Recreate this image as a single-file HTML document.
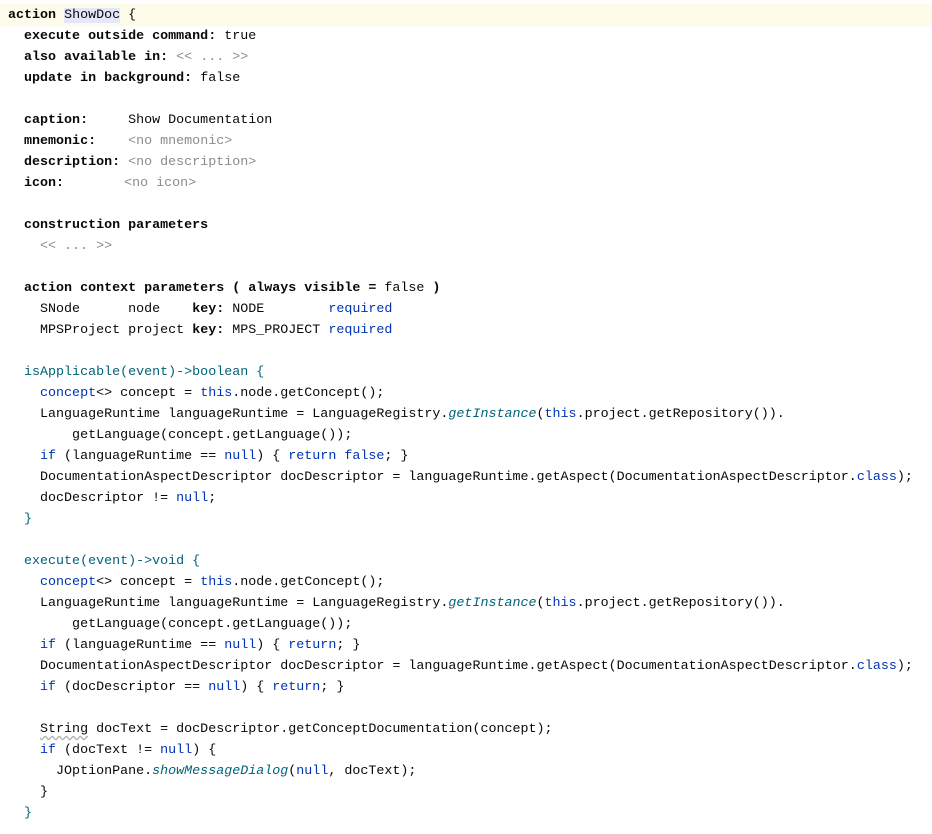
<!DOCTYPE html>
<html><head><meta charset="utf-8"><style>
body{margin:0;background:#fff;width:932px;height:834px;overflow:hidden;position:relative}
.hl{position:absolute;left:0;top:4px;width:932px;height:22px;background:#fdfbe9}
pre{position:absolute;left:8px;top:5px;margin:0;font-family:"Liberation Mono",monospace;font-size:13.35px;line-height:21px;color:#080808}
b{font-weight:bold}
.k{color:#0033b3}.m{color:#00627a}.i{color:#00627a;font-style:italic}.g{color:#8c8c8c}
.sel{background:#e6e6fa}
.w{text-decoration:underline wavy #b0b0b0;text-underline-offset:3px}
.nb{margin-left:-4px}
</style></head><body><div class="hl"></div>
<pre><b>action</b> <span class="sel">ShowDoc</span> {
  <b>execute outside command:</b> true
  <b>also available in:</b> <span class="g">&lt;&lt; ... &gt;&gt;</span>
  <b>update in background:</b> false

  <b>caption:</b>     Show Documentation
  <b>mnemonic:</b>    <span class="g">&lt;no mnemonic&gt;</span>
  <b>description:</b> <span class="g">&lt;no description&gt;</span>
  <b>icon:</b>        <span class="g nb">&lt;no icon&gt;</span>

  <b>construction parameters</b>
    <span class="g">&lt;&lt; ... &gt;&gt;</span>

  <b>action context parameters ( always visible = </b>false<b> )</b>
    SNode      node    <b>key:</b> NODE        <span class="k">required</span>
    MPSProject project <b>key:</b> MPS_PROJECT <span class="k">required</span>

  <span class="m">isApplicable(event)-&gt;boolean {</span>
    <span class="k">concept</span>&lt;&gt; concept = <span class="k">this</span>.node.getConcept();
    LanguageRuntime languageRuntime = LanguageRegistry.<span class="i">getInstance</span>(<span class="k">this</span>.project.getRepository()).
        getLanguage(concept.getLanguage());
    <span class="k">if</span> (languageRuntime == <span class="k">null</span>) { <span class="k">return false</span>; }
    DocumentationAspectDescriptor docDescriptor = languageRuntime.getAspect(DocumentationAspectDescriptor.<span class="k">class</span>);
    docDescriptor != <span class="k">null</span>;
  <span class="m">}</span>

  <span class="m">execute(event)-&gt;void {</span>
    <span class="k">concept</span>&lt;&gt; concept = <span class="k">this</span>.node.getConcept();
    LanguageRuntime languageRuntime = LanguageRegistry.<span class="i">getInstance</span>(<span class="k">this</span>.project.getRepository()).
        getLanguage(concept.getLanguage());
    <span class="k">if</span> (languageRuntime == <span class="k">null</span>) { <span class="k">return</span>; }
    DocumentationAspectDescriptor docDescriptor = languageRuntime.getAspect(DocumentationAspectDescriptor.<span class="k">class</span>);
    <span class="k">if</span> (docDescriptor == <span class="k">null</span>) { <span class="k">return</span>; }

    <span class="w">String</span> docText = docDescriptor.getConceptDocumentation(concept);
    <span class="k">if</span> (docText != <span class="k">null</span>) {
      JOptionPane.<span class="i">showMessageDialog</span>(<span class="k">null</span>, docText);
    }
  <span class="m">}</span></pre>
</body></html>
